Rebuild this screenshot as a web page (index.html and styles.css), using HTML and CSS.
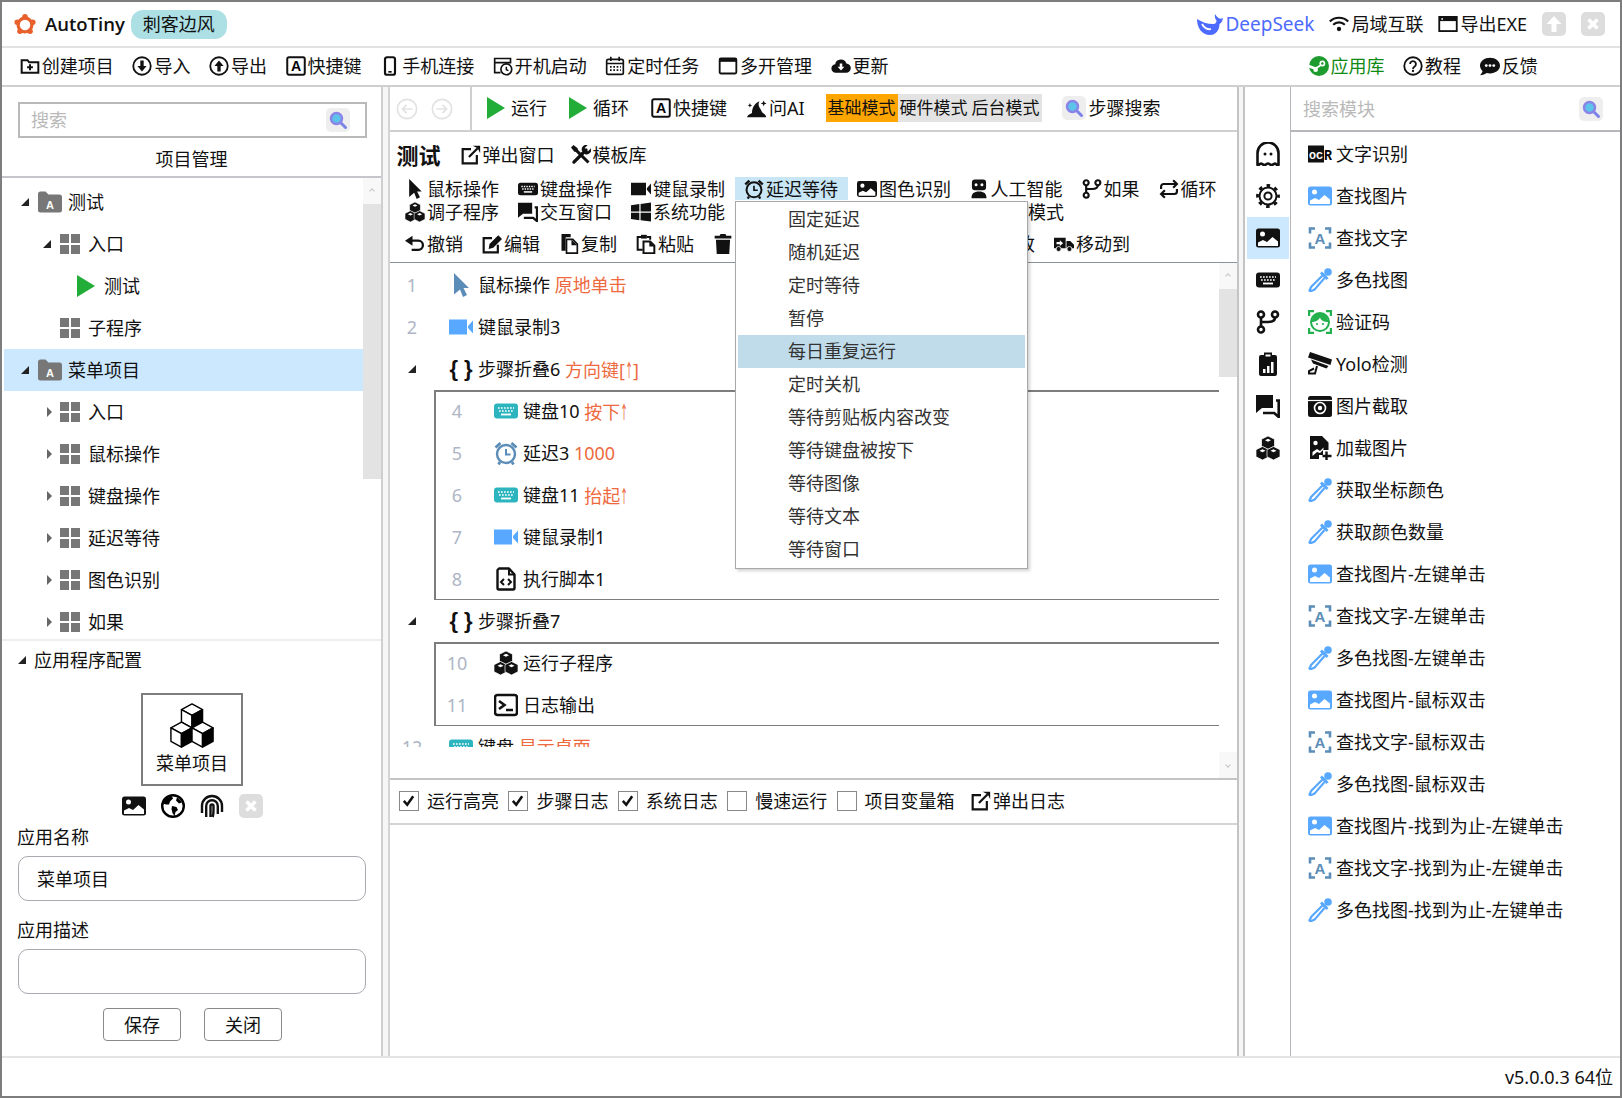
FILE: index.html
```html
<!DOCTYPE html>
<html lang="zh-CN">
<head>
    <meta charset="UTF-8">
    <title>AutoTiny</title>
    <link rel="stylesheet" href="styles.css">
</head>
<body>
<svg class="sprite" xmlns="http://www.w3.org/2000/svg">
    <symbol id="logo" viewBox="0 0 24 24"><circle cx="12" cy="13" r="7.5" fill="none" stroke="#e8602c" stroke-width="3.5"/><circle cx="12" cy="4" r="3" fill="#e8602c"/><circle cx="3.5" cy="10" r="3" fill="#e8602c"/><circle cx="20.5" cy="10" r="3" fill="#e8602c"/><circle cx="6.5" cy="20" r="3" fill="#e8602c"/><circle cx="17.5" cy="20" r="3" fill="#e8602c"/></symbol>
    <symbol id="whale" viewBox="0 0 26 22"><path fill="currentColor" d="M0 6c0 9 5 16 13 16 6 0 9.500-5 9.500-11 2-1 3-3 3.500-6-2 1-3 1-4.500 0C20.500 4 19 3 18 1c-.5 3 0 5 1.500 6.500 0 2-1 3.500-3 3.500C10 11 5 9 0 6z"/><path fill="none" stroke="#fff" stroke-width="1.8" d="M5 11c2 4 6 6 9 5"/></symbol>
    <symbol id="wifi" viewBox="0 0 24 24"><path fill="none" stroke="currentColor" stroke-width="2.6" d="M1 9c6-6 16-6 22 0M5 13c4-4 10-4 14 0"/><circle cx="12" cy="18" r="2.6" fill="currentColor"/></symbol>
    <symbol id="window" viewBox="0 0 24 24"><rect x="1.5" y="3.5" width="21" height="17" fill="none" stroke="currentColor" stroke-width="2.2"/><path fill="currentColor" d="M1.500 3.500h21v5h-21z"/><path fill="#fff" d="M4 5h2v2H4z"/></symbol>
    <symbol id="arrow-up" viewBox="0 0 24 24"><rect width="24" height="24" rx="5" fill="#ddd"/><path fill="#fff" d="M12 4l7.500 8h-5v8h-5v-8h-5z"/></symbol>
    <symbol id="cross" viewBox="0 0 24 24"><rect width="24" height="24" rx="5" fill="#ddd"/><path stroke="#fff" stroke-width="3.6" d="M7.500 7.500l9 9M16.500 7.500l-9 9"/></symbol>
    <symbol id="folder-plus" viewBox="0 0 24 24"><path fill="none" stroke="currentColor" stroke-width="2.4" d="M2 5h7l2 2.500h11V20H2z"/><path stroke="currentColor" stroke-width="2.4" d="M12 10v7M8.500 13.500h7"/></symbol>
    <symbol id="circle-down" viewBox="0 0 24 24"><circle cx="12" cy="12" r="10.5" fill="none" stroke="currentColor" stroke-width="2.2"/><path fill="currentColor" d="M10 5.500h4V12h3.500L12 18.500 6.500 12H10z"/></symbol>
    <symbol id="circle-up" viewBox="0 0 24 24"><circle cx="12" cy="12" r="10.5" fill="none" stroke="currentColor" stroke-width="2.2"/><path fill="currentColor" d="M10 18.500h4V12h3.500L12 5.500 6.500 12H10z"/></symbol>
    <symbol id="phone" viewBox="0 0 24 24"><rect x="6" y="1.5" width="12" height="21" rx="2.5" fill="none" stroke="currentColor" stroke-width="2.6"/><path stroke="currentColor" stroke-width="2" d="M10 19h4"/></symbol>
    <symbol id="startup" viewBox="0 0 24 24"><path fill="none" stroke="currentColor" stroke-width="2" d="M9 20H2V3h19v6M2 8h19"/><circle cx="16" cy="16" r="6.5" fill="#fff" stroke="currentColor" stroke-width="2"/><path fill="none" stroke="currentColor" stroke-width="1.8" d="M16 13v3.500l2.500 1"/></symbol>
    <symbol id="calendar" viewBox="0 0 24 24"><rect x="2" y="4" width="20" height="18" rx="2" fill="none" stroke="currentColor" stroke-width="2"/><path stroke="currentColor" stroke-width="2" d="M7 1v5M17 1v5M2 9h20"/><path stroke="currentColor" stroke-width="2" stroke-dasharray="2 2" d="M6 13h13M6 17h13"/></symbol>
    <symbol id="win-box" viewBox="0 0 24 24"><rect x="2" y="3" width="20" height="18" rx="1.5" fill="none" stroke="currentColor" stroke-width="2.2"/><path fill="currentColor" d="M2 3h20v4H2z"/></symbol>
    <symbol id="cloud" viewBox="0 0 24 24"><path fill="currentColor" d="M6 20a5 5 0 0 1-1-10 7 7 0 0 1 13.500-1A5.500 5.500 0 0 1 18 20z"/><path fill="#fff" d="M10.500 9h3v4H16l-4 4.500L8 13h2.500z"/></symbol>
    <symbol id="steam" viewBox="0 0 24 24"><circle cx="12" cy="12" r="12" fill="#1e9b2f"/><circle cx="16" cy="9" r="3.5" fill="#fff"/><circle cx="16" cy="9" r="1.5" fill="#1e9b2f"/><path fill="#fff" d="M0 14l7 2.500 7-4-1-2-5 3-8-3z"/><circle cx="8" cy="16.5" r="2.8" fill="#fff"/></symbol>
    <symbol id="question" viewBox="0 0 24 24"><circle cx="12" cy="12" r="10.5" fill="none" stroke="currentColor" stroke-width="2.2"/><path fill="none" stroke="currentColor" stroke-width="2.2" d="M8.500 9.500a3.500 3.500 0 1 1 5.500 3c-1.500 1-2 1.500-2 3"/><circle cx="12" cy="18" r="1.4" fill="currentColor"/></symbol>
    <symbol id="comment" viewBox="0 0 24 24"><path fill="currentColor" d="M12 2c6.500 0 12 4 12 9.500S18.500 21 12 21c-1.500 0-3-.2-4-.6C6.500 21.500 3 23 0 23c1.500-1.500 3-3.500 3-5C1 16 0 14 0 11.500 0 6 5.500 2 12 2z"/><circle cx="7.5" cy="11.5" r="1.7" fill="#fff"/><circle cx="12" cy="11.5" r="1.7" fill="#fff"/><circle cx="16.5" cy="11.5" r="1.7" fill="#fff"/></symbol>
    <symbol id="search" viewBox="0 0 24 24"><rect width="24" height="24" rx="5" fill="#eee"/><path stroke="#7c83e8" stroke-width="3" stroke-linecap="round" d="M14.500 14.500l5 5"/><circle cx="10.5" cy="10.5" r="5.5" fill="#5cc4e8" stroke="#8a84e8" stroke-width="2.5"/></symbol>
    <symbol id="back" viewBox="0 0 24 24"><circle cx="12" cy="12" r="10.5" fill="none" stroke="#e2e2e2" stroke-width="1.8"/><path fill="none" stroke="#e2e2e2" stroke-width="1.8" d="M18 12H7M11.500 7.500L7 12l4.500 4.500"/></symbol>
    <symbol id="forward" viewBox="0 0 24 24"><circle cx="12" cy="12" r="10.5" fill="none" stroke="#e2e2e2" stroke-width="1.8"/><path fill="none" stroke="#e2e2e2" stroke-width="1.8" d="M6 12h11M12.500 7.500L17 12l-4.500 4.500"/></symbol>
    <symbol id="play" viewBox="0 0 18 22"><path fill="#22ac38" d="M0 0l18 11L0 22z"/></symbol>
    <symbol id="hat" viewBox="0 0 24 24"><path fill="currentColor" d="M0 23c1-3 4-4 6-5 0-5 2-11 9-14-2 3-1 6 1 9 1 2 2 4 3 5 2 1 4 3 4 5z"/><path fill="currentColor" d="M20 3l1 2.500 2.500 1-2.500 1-1 2.500-1-2.500-2.500-1 2.500-1zM3.500 6l.8 2 2 .8-2 .8-.8 2-.8-2-2-.8 2-.8z"/></symbol>
    <symbol id="popup" viewBox="0 0 24 24"><path fill="none" stroke="currentColor" stroke-width="2.6" d="M12 5H2v17h17V12"/><path fill="none" stroke="currentColor" stroke-width="2.6" d="M9.500 14.500L20 4"/><path fill="currentColor" d="M14 1h9v9l-3-6z"/></symbol>
    <symbol id="tools" viewBox="0 0 24 24"><path stroke="currentColor" stroke-width="3.6" d="M4 4l17 17"/><path fill="currentColor" d="M0 3l3-3 5 4v3L7 8H4z"/><path stroke="currentColor" stroke-width="4" stroke-linecap="round" d="M3.500 20.500L18 6"/><path fill="currentColor" d="M13 6.500A5.500 5.500 0 0 1 20 0l-3.500 3.500 1 3 3 1L24 4a5.500 5.500 0 0 1-7 7z"/></symbol>
    <symbol id="pointer" viewBox="0 0 24 24"><path fill="currentColor" d="M5 0l15 15h-5.500l3.500 7-4 2-3-7.500-6 5z"/></symbol>
    <symbol id="keyboard" viewBox="0 0 24 24"><rect y="4.5" width="24" height="15" rx="3" fill="currentColor"/><path stroke="#fff" stroke-width="1.7" stroke-dasharray="1.7 1.3" d="M4 9h16M5 12h14"/><path stroke="#fff" stroke-width="1.8" d="M7 15.500h10"/></symbol>
    <symbol id="video" viewBox="0 0 24 24"><path fill="currentColor" d="M0 4.500h18v15H0zM19 11l5-5.500v13L19 13z"/></symbol>
    <symbol id="alarm" viewBox="0 0 24 24"><circle cx="12" cy="13" r="9" fill="none" stroke="currentColor" stroke-width="2.4"/><path fill="none" stroke="currentColor" stroke-width="2" d="M12 8v5.500h4.500"/><path fill="none" stroke="currentColor" stroke-width="2.8" d="M1.500 6.500L6.500 2M22.500 6.500L17.500 2M6 21l-1.500 2.500M18 21l1.500 2.500"/></symbol>
    <symbol id="image" viewBox="0 0 24 24"><rect y="2.5" width="24" height="19" rx="2.5" fill="currentColor"/><circle cx="6.5" cy="8" r="2.5" fill="#fff"/><path fill="#fff" d="M2 20v-3.500l5-2.500 4 2 5.500-5 5.500 4.500V20z"/></symbol>
    <symbol id="robot" viewBox="0 0 24 24"><path fill="currentColor" d="M7 .5h10a3.500 3.500 0 0 1 3.500 3.500v6a3.500 3.500 0 0 1-3.500 3.500H7A3.500 3.500 0 0 1 3.500 10V4A3.500 3.500 0 0 1 7 .5zM3 23c0-5.500 3-8 9-8s9 2.500 9 8z"/><circle cx="8.5" cy="7" r="1.8" fill="#fff"/><circle cx="15.5" cy="7" r="1.8" fill="#fff"/></symbol>
    <symbol id="branch" viewBox="0 0 24 24"><g fill="none" stroke="currentColor" stroke-width="2.6"><circle cx="5" cy="4.5" r="3"/><circle cx="5" cy="19.5" r="3"/><circle cx="19" cy="4.5" r="3"/><path d="M5 7.500v9M19 7.500c0 4-3 4.500-7 4.500H5"/></g></symbol>
    <symbol id="loop" viewBox="0 0 24 24"><g fill="none" stroke="currentColor" stroke-width="2.6"><path d="M2.500 12V9a3 3 0 0 1 3-3H21M17 1.500l4.500 4.500-4.500 4.500"/><path d="M21.500 12v3a3 3 0 0 1-3 3H3M7 13.500L2.500 18 7 22.500"/></g></symbol>
    <symbol id="cubes" viewBox="0 0 24 24"><g fill="currentColor" stroke="#fff" stroke-width=".7"><path d="M12 0l6.500 3.200v7L12 13.500l-6.500-3.300v-7z"/><path d="M6.500 10.500l6.500 3.200v7L6.500 24 0 20.700v-7z"/><path d="M17.500 10.500l6.500 3.200v7L17.500 24 11 20.700v-7z"/></g><path fill="#fff" d="M12 2.800l3 1.500-3 1.500-3-1.500zM6.500 13.300l3 1.500-3 1.500-3-1.500zM17.500 13.300l3 1.500-3 1.500-3-1.500z"/></symbol>
    <symbol id="chat" viewBox="0 0 24 24"><path fill="currentColor" d="M0 1h17v13H6l-6 5z"/><path fill="none" stroke="currentColor" stroke-width="2.6" d="M20 6.500h2.700V23l-4.500-4H7"/></symbol>
    <symbol id="windows" viewBox="0 0 24 24"><path fill="currentColor" d="M0 4l10-1.500v9H0zM11.500 2.300L24 .5v11H11.500zM0 13h10v9L0 20.500zM11.500 13H24v10.500l-12.500-1.700z"/></symbol>
    <symbol id="undo" viewBox="0 0 24 24"><path fill="none" stroke="currentColor" stroke-width="2.8" d="M4 8h12a5.500 5.500 0 0 1 0 11H8"/><path fill="currentColor" d="M9 2v12L0 8z"/></symbol>
    <symbol id="edit" viewBox="0 0 24 24"><path fill="none" stroke="currentColor" stroke-width="2.6" d="M12 5H2v17h17v-9"/><path fill="currentColor" d="M9 12L19.500 1.500 24 6 13.500 16.500 8 18z"/></symbol>
    <symbol id="copy" viewBox="0 0 24 24"><path fill="currentColor" d="M3 0h11v4H8v16H3z"/><path fill="none" stroke="currentColor" stroke-width="2" d="M9 6.500h7.500l5.500 5.500v11H9z"/><path fill="currentColor" d="M15 6.500l7 7h-7z"/></symbol>
    <symbol id="paste" viewBox="0 0 24 24"><path fill="none" stroke="currentColor" stroke-width="2.4" d="M8 19H2V3.500h4M13 3.500h4V7"/><path fill="currentColor" d="M6 1h7v4.500H6z"/><path fill="none" stroke="currentColor" stroke-width="2.4" d="M9 9h8l5 5v9H9z"/><path fill="currentColor" d="M16 9l6 6h-6z"/></symbol>
    <symbol id="trash" viewBox="0 0 24 24"><path fill="currentColor" d="M9 0h6l1 2h6v3.500H2V2h6zM3.500 7h17l-1 17h-15z"/></symbol>
    <symbol id="truck" viewBox="0 0 24 24"><path fill="currentColor" d="M0 4.500h14V17H0zM15 8.500h4.500l4.500 4.500v4h-9z"/><path fill="#fff" d="M3 9.700h4V7.500l4 3.500-4 3.500v-2.200H3z"/><circle cx="5.5" cy="18" r="3" fill="currentColor" stroke="#fff"/><circle cx="18.5" cy="18" r="3" fill="currentColor" stroke="#fff"/></symbol>
    <symbol id="file-code" viewBox="0 0 24 24"><path fill="none" stroke="currentColor" stroke-width="2.4" stroke-linejoin="round" d="M5 1.500h10l5.500 6V21a1.500 1.500 0 0 1-1.500 1.500H5A1.500 1.500 0 0 1 3.500 21V3z"/><path fill="none" stroke="currentColor" stroke-width="2" d="M15 1.500v6h5.500M10 12l-3 3 3 3M14 12l3 3-3 3"/></symbol>
    <symbol id="terminal" viewBox="0 0 24 24"><rect x="1" y="2" width="22" height="20" rx="2.5" fill="none" stroke="currentColor" stroke-width="2.6"/><path fill="none" stroke="currentColor" stroke-width="2.6" d="M5 8l5.500 4L5 16M12 17h7"/></symbol>
    <symbol id="ghost" viewBox="0 0 24 24"><path fill="none" stroke="currentColor" stroke-width="2.6" stroke-linejoin="round" d="M1.500 23V11a10.500 10.500 0 0 1 21 0v12c-1.500 .8-2.500-1.500-3.500-1.500s-2 1.500-3.500 1.500-2-1.500-3.500-1.500-2 1.500-3.500 1.500-2.500-1.500-3.500-1.500-2.500 2.300-3.500 1.500z"/><circle cx="9" cy="12" r="1.5" fill="currentColor"/><circle cx="15" cy="12" r="1.5" fill="currentColor"/></symbol>
    <symbol id="gear" viewBox="0 0 24 24"><circle cx="12" cy="12" r="8.5" fill="none" stroke="currentColor" stroke-width="2"/><circle cx="12" cy="12" r="10.5" fill="none" stroke="currentColor" stroke-width="2.8" stroke-dasharray="3.6 4.65" stroke-dashoffset="1.8"/><circle cx="12" cy="12" r="3.6" fill="none" stroke="currentColor" stroke-width="2"/></symbol>
    <symbol id="report" viewBox="0 0 24 24"><path fill="currentColor" d="M5 3h3V.5h8V3h3a2 2 0 0 1 2 2v17a2 2 0 0 1-2 2H5a2 2 0 0 1-2-2V5a2 2 0 0 1 2-2z"/><path fill="#fff" d="M9.500 2.500h5v2h-5zM7 17h2.500v4H7zM11 14h2.500v7H11zM15 10h2.500v11H15z"/></symbol>
    <symbol id="dropper" viewBox="0 0 24 24"><circle cx="20" cy="4" r="3.8" fill="currentColor"/><path stroke="currentColor" stroke-width="3" d="M13 4.500l6.500 6.500"/><path fill="none" stroke="currentColor" stroke-width="2.2" d="M14.500 7.500L3.500 18.500c-1 1-.8 2.500-2 3.800 .5 .8 .8 1 1.500 .8 1.500-1 3-1 4-2L16.500 10"/></symbol>
    <symbol id="face" viewBox="0 0 24 24"><path fill="none" stroke="currentColor" stroke-width="2.2" d="M6 1.100H1.100V6M18 1.100h4.900V6M1.100 18v4.900H6M22.900 18v4.900H18"/><circle cx="12" cy="12" r="9" fill="none" stroke="currentColor" stroke-width="2"/><path fill="currentColor" d="M3.500 12c3.500 0 6.500-1 8.500-4.500 1 3.500 4.500 4.500 8.500 4.500-1-5.500-4-9-8.500-9s-7.500 3.500-8.500 9z"/><circle cx="9" cy="14" r="1.1" fill="currentColor"/><circle cx="15" cy="14" r="1.1" fill="currentColor"/></symbol>
    <symbol id="cctv" viewBox="0 0 24 24"><path fill="currentColor" d="M2 0l22 7.500-1.500 5.500L0 5.500z"/><path fill="currentColor" d="M3 7.500l17.500 6.500-2 2.500L5 11.500z"/><path fill="none" stroke="currentColor" stroke-width="2" d="M9 14l-2 7.500H1V19l5-2.500"/></symbol>
    <symbol id="camera" viewBox="0 0 24 24"><rect y="2" width="24" height="21" rx="2.5" fill="currentColor"/><path stroke="#fff" stroke-width="1.2" d="M0 6.500h24"/><circle cx="12" cy="14" r="5.5" fill="none" stroke="#fff" stroke-width="1.6"/><circle cx="12" cy="14" r="2.2" fill="#fff"/></symbol>
    <symbol id="image-add" viewBox="0 0 24 24"><path fill="currentColor" d="M2 0h12l6.500 6.500V14H15v5h-4v4H2z"/><circle cx="7.5" cy="7" r="2.2" fill="#fff"/><path fill="#fff" d="M4.500 20v-4l4.500-3 3 2 3.500-3.500v2L12 17l-3-1z"/><path stroke="currentColor" stroke-width="2.4" d="M18.500 15.500V24M14.500 20h9"/></symbol>
    <symbol id="grid" viewBox="0 0 20 20"><path fill="#777" d="M0 0h9v9H0zM11 0h9v9h-9zM0 11h9v9H0zM11 11h9v9h-9z"/></symbol>
    <symbol id="stack" viewBox="0 0 48 48"><g stroke="#000" stroke-width="1.5" stroke-linejoin="round"><path fill="#fff" d="M24 1l11 6-11 6-11-6z"/><path fill="#fff" d="M13 7l11 6v13l-11-6z"/><path fill="#000" d="M35 7l-11 6v13l11-6z"/><path fill="#fff" d="M13 20l11 6-11 6-11-6z"/><path fill="#fff" d="M2 26l11 6v14L2 40z"/><path fill="#000" d="M24 26l-11 6v14l11-6z"/><path fill="#fff" d="M35 20l11 6-11 6-11-6z"/><path fill="#fff" d="M24 26l11 6v14l-11-6z"/><path fill="#000" d="M46 26l-11 6v14l11-6z"/></g></symbol>
    <symbol id="globe" viewBox="0 0 24 24"><circle cx="12" cy="12" r="10.8" fill="#fff" stroke="#000" stroke-width="2.4"/><path fill="#000" d="M5 5c2-2 4-2.500 6-2.500l1 2-3 3-1 3-3 0-3-1c.2-1.500.8-3 3-4.500zM11 12l4.500 1 1.500 3-2.500 2-1 4-2-3-1-4zM16 3.500c2 1 4 3 5 5l-3 1-3-3z"/></symbol>
    <symbol id="finger" viewBox="0 0 24 24"><g fill="none" stroke="currentColor" stroke-width="2.4"><path d="M2 19V12a10 10 0 0 1 20 0v6"/><path d="M6.200 23V12a5.800 5.800 0 0 1 11.600 0v8"/><path d="M10.500 23V12a1.500 1.500 0 0 1 3 0v4c0 3 0 5-.8 7"/></g></symbol>
    <symbol id="check" viewBox="0 0 20 20"><path fill="none" stroke="#111" stroke-width="3" d="M4.500 10.500l4 4.500 7-10"/></symbol>
</svg>

<div class="window">
    <div class="topbar">
        <svg class="logo"><use href="#logo"/></svg>
        <span class="app-name">AutoTiny</span>
        <span class="skin-chip">刺客边风</span>
        <div class="topbar-right">
            <span class="top-link deepseek"><svg class="whale"><use href="#whale"/></svg>DeepSeek</span>
            <span class="top-link"><svg class="ic"><use href="#wifi"/></svg>局域互联</span>
            <span class="top-link"><svg class="ic"><use href="#window"/></svg>导出EXE</span>
            <svg class="win-btn"><use href="#arrow-up"/></svg>
            <svg class="win-btn"><use href="#cross"/></svg>
        </div>
    </div>

    <div class="menubar">
        <span class="tool"><svg class="ic"><use href="#folder-plus"/></svg>创建项目</span>
        <span class="tool"><svg class="ic"><use href="#circle-down"/></svg>导入</span>
        <span class="tool"><svg class="ic"><use href="#circle-up"/></svg>导出</span>
        <span class="tool"><svg class="ic" viewBox="0 0 24 24"><rect x="1.500" y="1.500" width="21" height="21" rx="2" fill="none" stroke="#111" stroke-width="2.4"/><text x="12" y="18" text-anchor="middle" font-family="Liberation Sans" font-weight="700" font-size="17">A</text></svg>快捷键</span>
        <span class="tool"><svg class="ic"><use href="#phone"/></svg>手机连接</span>
        <span class="tool"><svg class="ic"><use href="#startup"/></svg>开机启动</span>
        <span class="tool"><svg class="ic"><use href="#calendar"/></svg>定时任务</span>
        <span class="tool"><svg class="ic"><use href="#win-box"/></svg>多开管理</span>
        <span class="tool"><svg class="ic"><use href="#cloud"/></svg>更新</span>
        <span class="tool app-store"><svg class="ic"><use href="#steam"/></svg>应用库</span>
        <span class="tool"><svg class="ic"><use href="#question"/></svg>教程</span>
        <span class="tool"><svg class="ic"><use href="#comment"/></svg>反馈</span>
    </div>

    <div class="main">
        <div class="left-panel">
            <div class="search-box">
                <span class="placeholder">搜索</span>
                <svg class="search-chip"><use href="#search"/></svg>
            </div>
            <div class="panel-title">项目管理</div>
            <div class="tree-wrap">
                <div class="tree">
                    <div class="tree-row lv1"><i class="tri open"></i><svg class="folder-ic" viewBox="0 0 24 24"><path fill="#777" d="M0 4a2.500 2.500 0 0 1 2.500-2.500h5l3 3H21.500A2.500 2.500 0 0 1 24 7v13a2.500 2.500 0 0 1-2.500 2.500h-19A2.500 2.500 0 0 1 0 20z"/><text x="12" y="18.500" text-anchor="middle" font-family="Liberation Sans" font-weight="700" font-size="11" fill="#fff">A</text></svg>测试</div>
                    <div class="tree-row lv2"><i class="tri open"></i><svg class="grid-ic"><use href="#grid"/></svg>入口</div>
                    <div class="tree-row lv3"><svg class="play-ic"><use href="#play"/></svg>测试</div>
                    <div class="tree-row lv2"><i class="tri none"></i><svg class="grid-ic"><use href="#grid"/></svg>子程序</div>
                    <div class="tree-row lv1 selected"><i class="tri open"></i><svg class="folder-ic" viewBox="0 0 24 24"><path fill="#777" d="M0 4a2.500 2.500 0 0 1 2.500-2.500h5l3 3H21.500A2.500 2.500 0 0 1 24 7v13a2.500 2.500 0 0 1-2.500 2.500h-19A2.500 2.500 0 0 1 0 20z"/><text x="12" y="18.500" text-anchor="middle" font-family="Liberation Sans" font-weight="700" font-size="11" fill="#fff">A</text></svg>菜单项目</div>
                    <div class="tree-row lv2"><i class="tri closed"></i><svg class="grid-ic"><use href="#grid"/></svg>入口</div>
                    <div class="tree-row lv2"><i class="tri closed"></i><svg class="grid-ic"><use href="#grid"/></svg>鼠标操作</div>
                    <div class="tree-row lv2"><i class="tri closed"></i><svg class="grid-ic"><use href="#grid"/></svg>键盘操作</div>
                    <div class="tree-row lv2"><i class="tri closed"></i><svg class="grid-ic"><use href="#grid"/></svg>延迟等待</div>
                    <div class="tree-row lv2"><i class="tri closed"></i><svg class="grid-ic"><use href="#grid"/></svg>图色识别</div>
                    <div class="tree-row lv2"><i class="tri closed"></i><svg class="grid-ic"><use href="#grid"/></svg>如果</div>
                </div>
                <div class="scrollbar tree-scroll">
                    <div class="scroll-btn"><i class="chev"></i></div>
                    <div class="scroll-thumb"></div>
                </div>
            </div>
            <div class="config">
                <div class="config-head"><i class="tri open"></i>应用程序配置</div>
                <div class="app-card">
                    <svg class="stack-ic"><use href="#stack"/></svg>
                    <span>菜单项目</span>
                </div>
                <div class="app-actions">
                    <svg class="ic-24"><use href="#image"/></svg>
                    <svg class="ic-24"><use href="#globe"/></svg>
                    <svg class="ic-24"><use href="#finger"/></svg>
                    <svg class="ic-24"><use href="#cross"/></svg>
                </div>
                <div class="field-label">应用名称</div>
                <div class="field-input">菜单项目</div>
                <div class="field-label second">应用描述</div>
                <div class="field-input"></div>
                <div class="config-buttons">
                    <span class="btn">保存</span>
                    <span class="btn">关闭</span>
                </div>
            </div>
        </div>

        <div class="split"></div>

        <div class="center-panel">
            <div class="run-bar">
                <div class="nav-btns">
                    <svg class="nav-ic"><use href="#back"/></svg>
                    <svg class="nav-ic"><use href="#forward"/></svg>
                </div>
                <span class="run-item"><svg class="play-big"><use href="#play"/></svg>运行</span>
                <span class="run-item"><svg class="play-big"><use href="#play"/></svg>循环</span>
                <span class="run-item"><svg class="ic" viewBox="0 0 24 24"><rect x="1.500" y="1.500" width="21" height="21" rx="2" fill="none" stroke="#111" stroke-width="2.4"/><text x="12" y="18" text-anchor="middle" font-family="Liberation Sans" font-weight="700" font-size="17">A</text></svg>快捷键</span>
                <span class="run-item ask"><svg class="ic"><use href="#hat"/></svg>问AI</span>
                <div class="mode-group">
                    <span class="mode active">基础模式</span>
                    <span class="mode">硬件模式</span>
                    <span class="mode">后台模式</span>
                </div>
                <span class="step-search"><svg class="search-chip-flow"><use href="#search"/></svg>步骤搜索</span>
            </div>

            <div class="editor-head">
                <div class="title-row">
                    <span class="project-name">测试</span>
                    <span class="title-link"><svg class="ic"><use href="#popup"/></svg>弹出窗口</span>
                    <span class="title-link"><svg class="ic"><use href="#tools"/></svg>模板库</span>
                </div>
                <div class="tool-row">
                    <span class="tool"><svg class="ic"><use href="#pointer"/></svg>鼠标操作</span>
                    <span class="tool"><svg class="ic"><use href="#keyboard"/></svg>键盘操作</span>
                    <span class="tool"><svg class="ic"><use href="#video"/></svg>键鼠录制</span>
                    <span class="tool hover"><svg class="ic"><use href="#alarm"/></svg>延迟等待</span>
                    <span class="tool"><svg class="ic"><use href="#image"/></svg>图色识别</span>
                    <span class="tool pull"><svg class="ic"><use href="#robot"/></svg>人工智能</span>
                    <span class="tool"><svg class="ic"><use href="#branch"/></svg>如果</span>
                    <span class="tool"><svg class="ic"><use href="#loop"/></svg>循环</span>
                </div>
                <div class="tool-row">
                    <span class="tool"><svg class="ic"><use href="#cubes"/></svg>调子程序</span>
                    <span class="tool"><svg class="ic"><use href="#chat"/></svg>交互窗口</span>
                    <span class="tool"><svg class="ic"><use href="#windows"/></svg>系统功能</span>
                    <span class="tool"><svg class="ic"><use href="#file-code"/></svg>文件操作</span>
                    <span class="tool"><svg class="ic"><use href="#ghost"/></svg>网页操作</span>
                    <span class="tool"><svg class="ic"><use href="#gear"/></svg>手机模式</span>
                </div>
                <div class="tool-row edit-row">
                    <span class="tool"><svg class="ic"><use href="#undo"/></svg>撤销</span>
                    <span class="tool"><svg class="ic"><use href="#edit"/></svg>编辑</span>
                    <span class="tool"><svg class="ic"><use href="#copy"/></svg>复制</span>
                    <span class="tool"><svg class="ic"><use href="#paste"/></svg>粘贴</span>
                    <span class="tool"><svg class="ic"><use href="#trash"/></svg>删除</span>
                    <span class="tool pull-more"><svg class="ic"><use href="#copy"/></svg>剪切</span>
                    <span class="tool"><svg class="ic"><use href="#edit"/></svg>注释</span>
                    <span class="tool"><svg class="ic"><use href="#edit"/></svg>批量修改</span>
                    <span class="tool"><svg class="ic"><use href="#truck"/></svg>移动到</span>
                </div>
            </div>

            <div class="step-area">
                <div class="step-list">
                    <div class="step-row"><span class="num">1</span><svg class="ic-24 steel"><use href="#pointer"/></svg>鼠标操作 <em>原地单击</em></div>
                    <div class="step-row"><span class="num">2</span><svg class="ic-24 blue"><use href="#video"/></svg>键鼠录制3</div>
                    <div class="step-row"><span class="num"><i class="tri open"></i></span><span class="braces">{ }</span>步骤折叠6 <em>方向键[<span class="up">↑</span>]</em></div>
                    <div class="step-group five">
                        <div class="step-row"><span class="num">4</span><svg class="ic-24 teal"><use href="#keyboard"/></svg>键盘10 <em>按下<span class="up">↑</span></em></div>
                        <div class="step-row"><span class="num">5</span><svg class="ic-24 steel"><use href="#alarm"/></svg>延迟3 <em>1000</em></div>
                        <div class="step-row"><span class="num">6</span><svg class="ic-24 teal"><use href="#keyboard"/></svg>键盘11 <em>抬起<span class="up">↑</span></em></div>
                        <div class="step-row"><span class="num">7</span><svg class="ic-24 blue"><use href="#video"/></svg>键鼠录制1</div>
                        <div class="step-row"><span class="num">8</span><svg class="ic-24"><use href="#file-code"/></svg>执行脚本1</div>
                    </div>
                    <div class="step-row"><span class="num"><i class="tri open"></i></span><span class="braces">{ }</span>步骤折叠7</div>
                    <div class="step-group two">
                        <div class="step-row"><span class="num">10</span><svg class="ic-24"><use href="#cubes"/></svg>运行子程序</div>
                        <div class="step-row"><span class="num">11</span><svg class="ic-24"><use href="#terminal"/></svg>日志输出</div>
                    </div>
                    <div class="step-row"><span class="num">12</span><svg class="ic-24 teal"><use href="#keyboard"/></svg>键盘 <em>显示桌面</em></div>
                </div>
                <div class="scrollbar step-scroll">
                    <div class="scroll-btn"><i class="chev"></i></div>
                    <div class="scroll-thumb"></div>
                    <div class="scroll-fill"></div>
                    <div class="scroll-btn"><i class="chev down"></i></div>
                </div>

                <div class="delay-menu">
                    <div class="menu-item">固定延迟</div>
                    <div class="menu-item">随机延迟</div>
                    <div class="menu-item">定时等待</div>
                    <div class="menu-item">暂停</div>
                    <div class="menu-item active">每日重复运行</div>
                    <div class="menu-item">定时关机</div>
                    <div class="menu-item">等待剪贴板内容改变</div>
                    <div class="menu-item">等待键盘被按下</div>
                    <div class="menu-item">等待图像</div>
                    <div class="menu-item">等待文本</div>
                    <div class="menu-item">等待窗口</div>
                </div>
            </div>

            <div class="log-options">
                <span class="opt"><span class="cb"><svg><use href="#check"/></svg></span>运行高亮</span>
                <span class="opt"><span class="cb"><svg><use href="#check"/></svg></span>步骤日志</span>
                <span class="opt"><span class="cb"><svg><use href="#check"/></svg></span>系统日志</span>
                <span class="opt"><span class="cb"></span>慢速运行</span>
                <span class="opt"><span class="cb"></span>项目变量箱</span>
                <span class="opt popup-log"><svg class="ic"><use href="#popup"/></svg>弹出日志</span>
            </div>
            <div class="log-body"></div>
        </div>

        <div class="split narrow"></div>

        <div class="side-tabs">
            <div class="side-tab"><svg class="ic-24"><use href="#ghost"/></svg></div>
            <div class="side-tab"><svg class="ic-24"><use href="#gear"/></svg></div>
            <div class="side-tab selected"><svg class="ic-24"><use href="#image"/></svg></div>
            <div class="side-tab"><svg class="ic-24"><use href="#keyboard"/></svg></div>
            <div class="side-tab"><svg class="ic-24"><use href="#branch"/></svg></div>
            <div class="side-tab"><svg class="ic-24"><use href="#report"/></svg></div>
            <div class="side-tab"><svg class="ic-24"><use href="#chat"/></svg></div>
            <div class="side-tab"><svg class="ic-24"><use href="#cubes"/></svg></div>
        </div>

        <div class="right-panel">
            <div class="module-search">
                <span class="placeholder">搜索模块</span>
                <svg class="search-chip-flow"><use href="#search"/></svg>
            </div>
            <div class="module-list">
                <div class="module"><svg class="ic-24" viewBox="0 0 24 24"><rect y="3.500" width="16" height="17" fill="#111"/><text x="1" y="16.500" font-family="Liberation Mono" font-weight="700" font-size="11" textLength="14" lengthAdjust="spacingAndGlyphs" fill="#fff">OC</text><text x="16" y="18" font-family="Liberation Mono" font-weight="700" font-size="14" textLength="8" lengthAdjust="spacingAndGlyphs">R</text></svg>文字识别</div>
                <div class="module"><svg class="ic-24 blue"><use href="#image"/></svg>查找图片</div>
                <div class="module"><svg class="ic-24" viewBox="0 0 24 24"><path fill="none" stroke="#5b8db8" stroke-width="2.600" d="M7 2.500H2v5M17 2.500h5v5M2 16.500v5h5M22 16.500v5h-5"/><text x="12" y="18" text-anchor="middle" font-family="Liberation Sans" font-weight="700" font-size="15" fill="#5b8db8">A</text></svg>查找文字</div>
                <div class="module"><svg class="ic-24 blue"><use href="#dropper"/></svg>多色找图</div>
                <div class="module"><svg class="ic-24 green"><use href="#face"/></svg>验证码</div>
                <div class="module"><svg class="ic-24"><use href="#cctv"/></svg>Yolo检测</div>
                <div class="module"><svg class="ic-24"><use href="#camera"/></svg>图片截取</div>
                <div class="module"><svg class="ic-24"><use href="#image-add"/></svg>加载图片</div>
                <div class="module"><svg class="ic-24 blue"><use href="#dropper"/></svg>获取坐标颜色</div>
                <div class="module"><svg class="ic-24 blue"><use href="#dropper"/></svg>获取颜色数量</div>
                <div class="module"><svg class="ic-24 blue"><use href="#image"/></svg>查找图片-左键单击</div>
                <div class="module"><svg class="ic-24" viewBox="0 0 24 24"><path fill="none" stroke="#5b8db8" stroke-width="2.600" d="M7 2.500H2v5M17 2.500h5v5M2 16.500v5h5M22 16.500v5h-5"/><text x="12" y="18" text-anchor="middle" font-family="Liberation Sans" font-weight="700" font-size="15" fill="#5b8db8">A</text></svg>查找文字-左键单击</div>
                <div class="module"><svg class="ic-24 blue"><use href="#dropper"/></svg>多色找图-左键单击</div>
                <div class="module"><svg class="ic-24 blue"><use href="#image"/></svg>查找图片-鼠标双击</div>
                <div class="module"><svg class="ic-24" viewBox="0 0 24 24"><path fill="none" stroke="#5b8db8" stroke-width="2.600" d="M7 2.500H2v5M17 2.500h5v5M2 16.500v5h5M22 16.500v5h-5"/><text x="12" y="18" text-anchor="middle" font-family="Liberation Sans" font-weight="700" font-size="15" fill="#5b8db8">A</text></svg>查找文字-鼠标双击</div>
                <div class="module"><svg class="ic-24 blue"><use href="#dropper"/></svg>多色找图-鼠标双击</div>
                <div class="module"><svg class="ic-24 blue"><use href="#image"/></svg>查找图片-找到为止-左键单击</div>
                <div class="module"><svg class="ic-24" viewBox="0 0 24 24"><path fill="none" stroke="#5b8db8" stroke-width="2.600" d="M7 2.500H2v5M17 2.500h5v5M2 16.500v5h5M22 16.500v5h-5"/><text x="12" y="18" text-anchor="middle" font-family="Liberation Sans" font-weight="700" font-size="15" fill="#5b8db8">A</text></svg>查找文字-找到为止-左键单击</div>
                <div class="module"><svg class="ic-24 blue"><use href="#dropper"/></svg>多色找图-找到为止-左键单击</div>
            </div>
        </div>
    </div>

    <div class="statusbar">v5.0.0.3 64位</div>
</div>
</body>
</html>
```

FILE: styles.css
```css
* {
    box-sizing: border-box;
    margin: 0;
    padding: 0;
}

body {
    width: 1622px;
    height: 1098px;
    overflow: hidden;
    background-color: #fff;
    color: #111;
    font-family: "Noto Sans", "Noto Sans CJK SC", sans-serif;
    font-size: 18px;
    line-height: 24px;
}

em {
    font-style: normal;
    color: #ee6a3e;
}

svg {
    display: block;
    flex-shrink: 0;
}

.sprite {
    width: 0;
    height: 0;
    position: absolute;
}

.window {
    display: flex;
    flex-direction: column;
    height: 1098px;
    border: 2px solid #7d7d7d;
}

.ic {
    width: 20px;
    height: 20px;
    margin-right: 2px;
}

.ic-24 {
    width: 24px;
    height: 24px;
}

.steel { color: #5b8db8; }
.blue { color: #58a8ff; }
.teal { color: #2cb5bf; }
.green { color: #22b14c; }

/* top bar */
.topbar {
    display: flex;
    align-items: center;
    height: 46px;
    flex-shrink: 0;
    padding-left: 12px;
    border-bottom: 2px solid #e2e2e2;
}

.logo {
    width: 22px;
    height: 22px;
}

.app-name {
    margin-left: 9px;
    font-family: "Open Sans", "Noto Sans", sans-serif;
    font-size: 18.5px;
    font-weight: 600;
}

.skin-chip {
    display: flex;
    align-items: center;
    justify-content: center;
    width: 96px;
    height: 29px;
    margin-left: 6px;
    background-color: #ade0e4;
    border-radius: 12px;
}

.topbar-right {
    display: flex;
    align-items: center;
    margin-left: auto;
    padding-right: 15px;
}

.top-link {
    display: flex;
    align-items: center;
    margin-right: 15px;
}

.deepseek {
    color: #4d6bfe;
    font-size: 19px;
}

.whale {
    width: 26px;
    height: 22px;
    margin-right: 2px;
}

.win-btn {
    width: 24px;
    height: 24px;
    margin-left: 15px;
}

.top-link + .win-btn {
    margin-left: 0;
}

/* menu bar */
.menubar {
    display: flex;
    align-items: center;
    height: 39px;
    flex-shrink: 0;
    padding: 0 0 2px 8.5px;
    border-bottom: 2px solid #cfcfcf;
}

.tool {
    display: flex;
    align-items: center;
    padding: 0 9.5px;
    white-space: nowrap;
}

.menubar .tool {
    padding: 0 9.3px;
}

.app-store {
    margin-left: auto;
    color: #0f8a12;
}

.menubar .tool:last-child {
    margin-right: 73px;
}

/* main columns */
.main {
    display: flex;
    flex: 1;
    min-height: 0;
}

.split {
    width: 5px;
    background-color: #f6f6f6;
}

.split.narrow {
    width: 4px;
}

.left-panel {
    display: flex;
    flex-direction: column;
    width: 381px;
    border-right: 2px solid #cfcfcf;
}

.search-box {
    display: flex;
    align-items: center;
    justify-content: space-between;
    height: 36px;
    margin: 15px 14px 0 16px;
    padding: 0 15px 0 11px;
    border: 2px solid #b9b9b9;
}

.placeholder {
    color: #b9b9b9;
}

.search-chip,
.search-chip-flow {
    width: 24px;
    height: 24px;
}

.panel-title {
    height: 40px;
    padding-top: 9px;
    text-align: center;
    border-bottom: 2px solid #c4c6cc;
}

.tree-wrap {
    display: flex;
    height: 461px;
    flex-shrink: 0;
    padding-left: 2px;
    overflow: hidden;
}

.tree {
    flex: 1;
    padding-top: 3px;
}

.tree-row {
    display: flex;
    align-items: center;
    height: 42px;
}

.tree-row.selected {
    background-color: #cce8ff;
}

.lv1 { padding-left: 17px; }
.lv2 { padding-left: 39px; }
.lv3 { padding-left: 73px; }

.tri {
    display: block;
    flex-shrink: 0;
    width: 0;
    height: 0;
}

.tri.open {
    border-left: 8px solid transparent;
    border-bottom: 8px solid #222;
}

.tri.closed {
    margin-left: 4px;
    border-top: 5px solid transparent;
    border-bottom: 5px solid transparent;
    border-left: 5px solid #666;
}

.lv1 .tri { margin-right: 9px; }
.lv2 .tri.open { margin-right: 9px; }
.lv2 .tri.closed { margin-right: 8px; }
.lv2 .tri.none { margin-right: 17px; }

.folder-ic {
    width: 24px;
    height: 24px;
    margin-right: 6px;
}

.grid-ic {
    width: 20px;
    height: 20px;
    margin-right: 8px;
}

.play-ic {
    width: 18px;
    height: 22px;
    margin-right: 9px;
}

.scrollbar {
    display: flex;
    flex-direction: column;
    flex-shrink: 0;
    width: 18px;
}

.scroll-btn {
    display: flex;
    align-items: center;
    justify-content: center;
    height: 26px;
    background-color: #f8f8f8;
}

.chev {
    display: block;
    width: 4px;
    height: 4px;
    border-top: 1px solid #c4c4c4;
    border-left: 1px solid #c4c4c4;
    transform: rotate(45deg);
}

.chev.down {
    transform: rotate(225deg);
}

.scroll-thumb {
    background-color: #e3e3e3;
}

.tree-scroll .scroll-thumb {
    height: 275px;
}

.config {
    flex: 1;
    padding-top: 7px;
    border-top: 2px solid #eee;
}

.config-head {
    display: flex;
    align-items: center;
    height: 24px;
    padding-left: 16px;
}

.config-head .tri {
    margin-right: 8px;
}

.app-card {
    display: flex;
    flex-direction: column;
    align-items: center;
    width: 102px;
    height: 93px;
    margin: 21px 0 0 139px;
    padding-top: 8px;
    border: 2px solid #7d7d7d;
}

.stack-ic {
    width: 46px;
    height: 46px;
}

.app-card span {
    margin-top: 2px;
}

.app-actions {
    display: flex;
    gap: 15px;
    margin: 8px 0 0 120px;
}

.field-label {
    height: 24px;
    margin: 7px 0 0 15px;
}

.field-label.second {
    margin-top: 17px;
}

.field-input {
    height: 45px;
    margin: 7px 15px 0 16px;
    padding: 10px 18px;
    border: 1.5px solid #a9a9b0;
    border-radius: 10px;
}

.config-buttons {
    display: flex;
    gap: 23px;
    margin: 14px 0 0 101px;
}

.btn {
    display: flex;
    align-items: center;
    justify-content: center;
    width: 78px;
    height: 33px;
    border: 1.5px solid #8a8a8a;
    border-radius: 4px;
}

/* center column */
.center-panel {
    display: flex;
    flex-direction: column;
    width: 851px;
    border-left: 2px solid #d4d4d4;
    border-right: 2px solid #c4c4c4;
}

.run-bar {
    display: flex;
    align-items: center;
    height: 45px;
    flex-shrink: 0;
    border-bottom: 2px solid #cfcfcf;
}

.nav-btns {
    display: flex;
    align-self: stretch;
    align-items: center;
    gap: 13px;
    width: 82px;
    padding-left: 6px;
    border-right: 2px solid #cfcfcf;
}

.nav-ic {
    width: 22px;
    height: 22px;
}

.run-item {
    display: flex;
    align-items: center;
    margin: 0 0 2px 22px;
}

.nav-btns + .run-item {
    margin-left: 15px;
}

.play-big {
    width: 18px;
    height: 22px;
    margin-right: 6px;
}

.run-item.ask {
    margin-left: 20px;
}

.mode-group {
    display: flex;
    height: 28px;
    margin: 0 0 2px 21px;
}

.mode {
    display: flex;
    align-items: center;
    justify-content: center;
    width: 72px;
    background-color: #e3e3e3;
    font-size: 17px;
}

.mode.active {
    background-color: #ffa500;
}

.step-search {
    display: flex;
    align-items: center;
    margin: 0 0 2px 20px;
}

.step-search svg {
    margin-right: 3px;
}

.editor-head {
    flex-shrink: 0;
    height: 131px;
    padding-left: 5.5px;
    border-bottom: 1.5px solid #8a929c;
}

.title-row {
    display: flex;
    align-items: center;
    height: 45px;
}

.project-name {
    font-size: 22px;
    font-weight: 700;
    margin-right: 20px;
    margin-left: 1px;
}

.title-link {
    display: flex;
    align-items: center;
    margin-right: 16px;
}

.tool-row {
    display: flex;
    height: 23px;
}

.tool-row .tool {
    height: 23px;
}

.tool.hover {
    background-color: #c8e6f5;
}

.tool.pull {
    margin-left: -1.5px;
}

.tool.pull-more {
    margin-right: -3px;
}

.edit-row {
    height: 26px;
    margin-top: 8px;
}

.edit-row .tool {
    height: 26px;
}

/* steps */
.step-area {
    position: relative;
    display: flex;
    height: 515px;
    flex-shrink: 0;
}

.step-list {
    flex: 1;
    height: 484px;
    padding-top: 1px;
    overflow: hidden;
}

.step-row {
    display: flex;
    align-items: center;
    height: 42px;
    white-space: pre;
}

.num {
    display: flex;
    align-items: center;
    justify-content: center;
    width: 44px;
    margin-right: 15px;
    color: #aeb6c6;
}

.step-row > svg {
    margin-right: 5px;
}

.braces {
    width: 24px;
    margin-right: 5px;
    font-family: "Liberation Sans", sans-serif;
    font-size: 22px;
    font-weight: 700;
    text-align: center;
}

.up {
    display: inline-block;
    width: 8px;
    font-family: "Noto Sans CJK SC", sans-serif;
    font-weight: 500;
    transform: scaleX(.45);
    transform-origin: left;
}

.step-group {
    margin-left: 44px;
    border: 2px solid #7d7d7d;
    border-right: none;
    border-bottom-width: 1.5px;
}

.step-group .num {
    width: 42px;
    margin-right: 16px;
}

.step-group .step-row:first-child {
    margin-top: -2px;
}

.step-group.five { height: 210px; }
.step-group.two { height: 84px; }

.step-scroll {
    height: 100%;
}

.step-scroll .scroll-thumb {
    height: 88px;
}

.scroll-fill {
    flex: 1;
}

.delay-menu {
    position: absolute;
    top: -62px;
    left: 345px;
    width: 293px;
    height: 368px;
    padding: 1px 2px;
    background-color: #fff;
    border: 1.5px solid #a8a8a8;
    box-shadow: 2px 2px 3px rgba(0,0,0,0.18);
}

.menu-item {
    height: 33px;
    padding-left: 50px;
    color: #333;
    line-height: 33px;
}

.menu-item.active {
    background-color: #c0dcea;
}

.log-options {
    display: flex;
    align-items: center;
    gap: 9.4px;
    height: 47px;
    flex-shrink: 0;
    padding: 0 0 2px 9px;
    border-top: 2px solid #c4c4c4;
    border-bottom: 2px solid #d4d4d4;
}

.opt {
    display: flex;
    align-items: center;
}

.cb {
    width: 20px;
    height: 20px;
    margin-right: 8px;
    border: 1.5px solid #888;
}

.cb svg {
    width: 17px;
    height: 17px;
}

.popup-log {
    margin-left: 7px;
}

.log-body {
    flex: 1;
}

/* side tabs */
.side-tabs {
    display: flex;
    flex-direction: column;
    align-items: center;
    width: 48px;
    padding-top: 46px;
    border-left: 2px solid #c4c4c4;
    border-right: 1.5px solid #b6b6bc;
}

.side-tab {
    display: flex;
    align-items: center;
    justify-content: center;
    width: 42px;
    height: 42px;
}

.side-tab.selected {
    background-color: #cce8ff;
}

/* module list */
.right-panel {
    flex: 1;
}

.module-search {
    display: flex;
    align-items: center;
    justify-content: space-between;
    height: 45px;
    padding: 0 17px 0 12px;
    border-bottom: 2px solid #b6b6bc;
}

.module-list {
    padding: 1px 0 0 17px;
}

.module {
    display: flex;
    align-items: center;
    height: 42px;
}

.module svg {
    margin-right: 4px;
}

.statusbar {
    height: 40px;
    flex-shrink: 0;
    padding-right: 7px;
    background-color: #fff;
    border-top: 2px solid #e4e4e4;
    line-height: 38px;
    text-align: right;
}
```
